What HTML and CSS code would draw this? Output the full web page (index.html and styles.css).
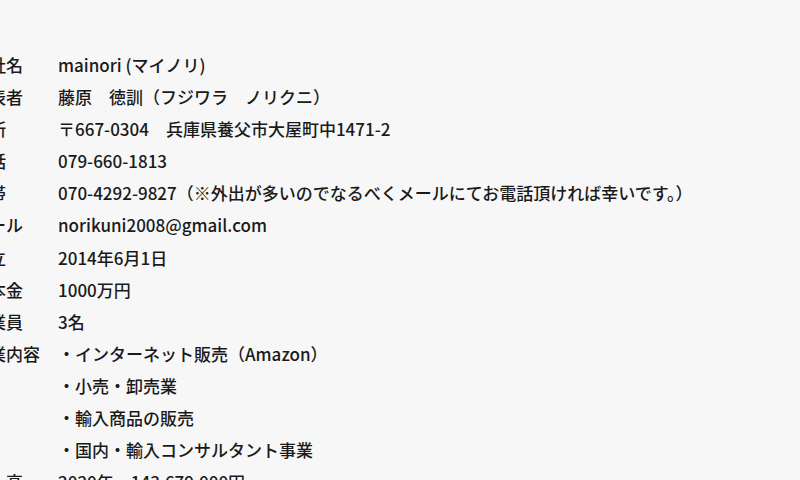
FILE: index.html
```html
<!DOCTYPE html>
<html lang="ja">
<head>
<meta charset="utf-8">
<title>会社概要</title>
<link rel="stylesheet" href="styles.css">
</head>
<body>
<main class="page">
  <dl class="info">
    <div class="row"><dt>会社名</dt><dd>mainori (マイノリ)</dd></div>
    <div class="row"><dt>代表者</dt><dd>藤原　徳訓（フジワラ　ノリクニ）</dd></div>
    <div class="row"><dt>住所</dt><dd>〒667-0304　兵庫県養父市大屋町中1471-2</dd></div>
    <div class="row"><dt>電話</dt><dd>079-660-1813</dd></div>
    <div class="row"><dt>携帯</dt><dd>070-4292-9827（※外出が多いのでなるべくメールにてお電話頂ければ幸いです。）</dd></div>
    <div class="row"><dt>メール</dt><dd>norikuni2008@gmail.com</dd></div>
    <div class="row"><dt>設立</dt><dd>2014年6月1日</dd></div>
    <div class="row"><dt>資本金</dt><dd>1000万円</dd></div>
    <div class="row"><dt>従業員</dt><dd>3名</dd></div>
    <div class="row"><dt>事業内容</dt>
      <dd>
        <ul class="list">
          <li>・インターネット販売（Amazon）</li>
          <li>・小売・卸売業</li>
          <li>・輸入商品の販売</li>
          <li>・国内・輸入コンサルタント事業</li>
        </ul>
      </dd>
    </div>
    <div class="row"><dt>売上高</dt><dd>2020年　143,679,000円</dd></div>
  </dl>
</main>
</body>
</html>
```

FILE: styles.css
```css
html, body {
  margin: 0;
  padding: 0;
  background: #f7f7f7;
}

body {
  color: #1a1a1a;
  font-family: "Noto Sans CJK JP", "Noto Sans", sans-serif;
  font-size: 17px;
  font-weight: 500;
  font-feature-settings: "pkna";
  overflow: hidden;
  height: 480px;
}

.page {
  padding-top: 49px;
  margin-left: -28px;
}

.info {
  margin: 0;
}

.row {
  display: grid;
  grid-template-columns: 86px 1fr;
}

.row dt,
.row dd {
  margin: 0;
  line-height: 32.1px;
  white-space: nowrap;
}

.list {
  list-style: none;
  margin: 0;
  padding: 0;
}
```
